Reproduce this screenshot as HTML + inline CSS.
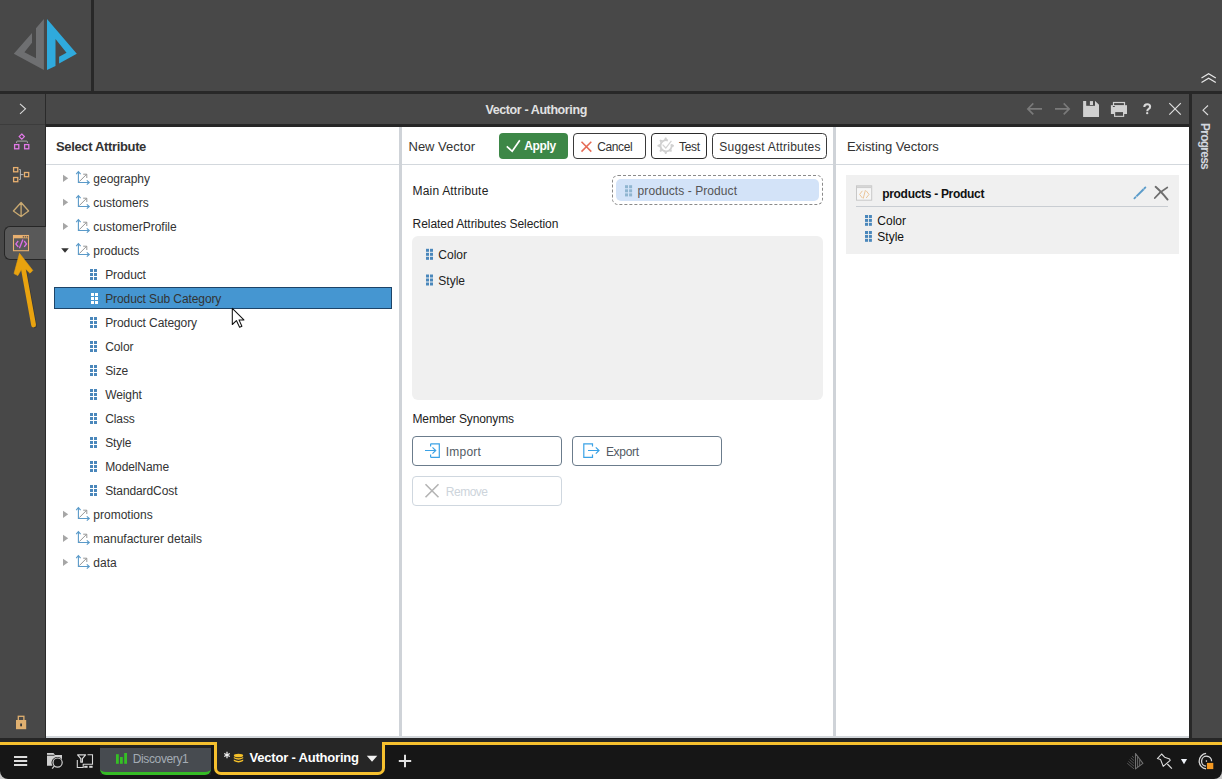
<!DOCTYPE html>
<html><head><meta charset="utf-8">
<style>
*{margin:0;padding:0;box-sizing:border-box}
html,body{width:1222px;height:779px;overflow:hidden;background:#484848;font-family:"Liberation Sans",sans-serif}
.a{position:absolute}
.t{position:absolute;white-space:nowrap;line-height:1;font-size:12px;color:#262626}
svg{position:absolute;overflow:visible}
</style></head><body>
<!-- top bar -->
<div class="a" style="left:91px;top:0;width:3px;height:91px;background:#282828"></div>
<div class="a" style="left:0;top:91px;width:1222px;height:3px;background:#282828"></div>
<svg style="left:0;top:0" width="92" height="91">
  <polygon fill="#6e6f71" points="43.9,18.9 43.9,70.1 13.8,53.7 32,32.9 32,42.7 24.4,52.2 36,58.3 36,28.3"/>
  <polygon fill="#2faadd" points="47,18.9 76.8,53.7 59.1,63.4 59.1,56.7 66.5,52.7 55.5,39 55.5,65.9 47,70.1"/>
</svg>
<svg style="left:1201px;top:73px" width="16" height="10">
  <polyline points="0.5,5 7.6,0.8 14.8,5" fill="none" stroke="#e6e6e6" stroke-width="1.3"/>
  <polyline points="0.5,9.5 7.6,5.2 14.8,9.5" fill="none" stroke="#e6e6e6" stroke-width="1.3"/>
</svg>

<!-- row 2 left cell -->
<div class="a" style="left:45px;top:94px;width:1px;height:644px;background:#2a2a2a"></div>
<div class="a" style="left:0;top:124px;width:45px;height:1px;background:#3c3c3c"></div>
<svg style="left:19px;top:103px" width="8" height="12">
  <polyline points="1,0.8 6.5,5.8 1,10.8" fill="none" stroke="#dcdcdc" stroke-width="1.1"/>
</svg>

<!-- title bar -->
<div class="a" style="left:46px;top:124px;width:1143px;height:3px;background:#262626"></div>
<div class="a" style="left:1189px;top:94px;width:3px;height:651px;background:#282828"></div>
<div class="t" style="left:485.5px;top:103.6px;font-size:12.5px;font-weight:bold;color:#e2e2e2;letter-spacing:-0.4px">Vector - Authoring</div>

<!-- content white -->
<div class="a" style="left:46px;top:127px;width:1143px;height:609px;background:#fff"></div>
<div class="a" style="left:46px;top:736px;width:1143px;height:3px;background:#d2d6da"></div>
<div class="a" style="left:0;top:738px;width:1222px;height:4px;background:#262626"></div>

<!-- progress panel -->
<svg style="left:1202px;top:105px" width="8" height="11">
  <polyline points="6,0.5 1,5.2 6,10" fill="none" stroke="#dcdcdc" stroke-width="1.1"/>
</svg>
<div class="t" style="left:1211px;top:123px;font-size:12px;font-weight:bold;color:#d2d6de;transform-origin:0 0;transform:rotate(90deg);letter-spacing:-0.75px">Progress</div>

<!-- panel dividers -->
<div class="a" style="left:399px;top:127px;width:3px;height:609px;background:#cfd3d8"></div>
<div class="a" style="left:833px;top:127px;width:3px;height:609px;background:#cfd3d8"></div>
<div class="a" style="left:46px;top:164px;width:353px;height:1px;background:#d3d8dd"></div>
<div class="a" style="left:402px;top:164px;width:431px;height:1px;background:#d3d8dd"></div>
<div class="a" style="left:836px;top:164px;width:353px;height:1px;background:#d3d8dd"></div>


<!-- left sidebar icons -->
<svg style="left:0;top:125px" width="45" height="140">
  <!-- icon1 hierarchy -->
  <g transform="translate(0,-125)">
  <polygon points="21.8,134 24.4,136.6 21.8,139.2 19.2,136.6" fill="none" stroke="#e27ae8" stroke-width="1.2"/>
  <path d="M16.6,143 v-1 q0,-0.9 0.9,-0.9 h9 q0.9,0 0.9,0.9 v1" fill="none" stroke="#a8a8a8" stroke-width="1"/>
  <rect x="14.6" y="144.6" width="4.2" height="4.2" fill="none" stroke="#e27ae8" stroke-width="1.3"/>
  <rect x="24.6" y="144.6" width="4.2" height="4.2" fill="none" stroke="#e27ae8" stroke-width="1.3"/>
  <!-- icon2 -->
  <rect x="13.6" y="167.6" width="4.2" height="4.2" fill="none" stroke="#e8b070" stroke-width="1.3"/>
  <rect x="13.6" y="177.5" width="4.2" height="4.2" fill="none" stroke="#e8b070" stroke-width="1.3"/>
  <rect x="24.5" y="172.5" width="4.2" height="4.2" fill="none" stroke="#e8b070" stroke-width="1.3"/>
  <path d="M19.2,169.5 h1.2 v10 h-1.2 M20.4,174.6 h3" fill="none" stroke="#b8b8b8" stroke-width="1"/>
  <!-- icon3 pyramid -->
  <path d="M21.1,202.5 L28.6,211 L21.1,216.5 L13.4,211 Z M21.1,202.5 V216.5" fill="none" stroke="#c9a971" stroke-width="1.3" stroke-linejoin="round"/>
  </g>
</svg>
<!-- selected sidebar tab -->
<div class="a" style="left:4px;top:226px;width:42px;height:34px;background:#595959;border:1.7px solid #262626;border-right:none;border-radius:6px 0 0 6px"></div>
<svg style="left:0;top:225px" width="45" height="40">
  <g transform="translate(0,-225)">
  <rect x="13.5" y="235.5" width="15" height="15.2" fill="none" stroke="#e8b070" stroke-width="1.1"/>
  <rect x="13.5" y="235.5" width="15" height="2.8" fill="#e8b070"/>
  <rect x="22.8" y="236.2" width="1.3" height="1.3" fill="#5a5048"/><rect x="24.8" y="236.2" width="1.3" height="1.3" fill="#5a5048"/><rect x="26.8" y="236.2" width="1.3" height="1.3" fill="#5a5048"/>
  <path d="M18.2,241 L15.9,243.9 L18.2,246.9 M24.2,241 L26.5,243.9 L24.2,246.9 M22.9,239.4 L19.4,248.2" fill="none" stroke="#dd6fe6" stroke-width="1.35"/>
  </g>
</svg>
<!-- yellow arrow -->
<svg style="left:0;top:245px" width="45" height="90">
  <g transform="translate(0,-245)">
  <path d="M33.6,325 L23.6,270" stroke="#000" stroke-opacity="0.22" stroke-width="5" stroke-linecap="round" transform="translate(0.8,0.8)"/>
  <path d="M33.6,325 L23.6,270" stroke="#e9a30f" stroke-width="4.8" stroke-linecap="round"/>
  <polygon points="19.5,253.3 32.8,270.4 30,273.2 25.6,269 21.2,269.8 17.8,275.6 14,273.6" fill="#e9a30f" stroke="#e9a30f" stroke-width="0.6" stroke-linejoin="round"/>
  </g>
</svg>
<!-- lock -->
<svg style="left:0;top:712px" width="45" height="22">
  <g transform="translate(0,-712)">
  <rect x="18.3" y="716.3" width="5.6" height="5" fill="none" stroke="#e0b070" stroke-width="1.3"/>
  <rect x="16" y="720" width="10.2" height="9.2" fill="#e0b070"/>
  <rect x="20.2" y="723.5" width="1.8" height="2.8" fill="#3a3a3a"/>
  </g>
</svg>

<!-- title bar icons -->
<svg style="left:1020px;top:95px" width="165" height="28">
  <g transform="translate(-1020,-95)">
  <path d="M1042,108.9 H1028 M1033.3,103.4 L1027.8,108.9 L1033.3,114.4" fill="none" stroke="#7a7a7a" stroke-width="1.6"/>
  <path d="M1055,108.9 H1069 M1063.7,103.4 L1069.2,108.9 L1063.7,114.4" fill="none" stroke="#7a7a7a" stroke-width="1.6"/>
  <path d="M1083.1,101 H1095.2 L1099,104.7 V116.9 H1083.1 Z" fill="#d0d0d0"/>
  <rect x="1086.2" y="100.5" width="8.8" height="5.3" fill="#484848"/>
  <rect x="1089.9" y="101.1" width="3.1" height="3.9" fill="#d0d0d0"/>
  <rect x="1113.5" y="102.5" width="11" height="3.5" fill="none" stroke="#d0d0d0" stroke-width="1.2"/>
  <rect x="1110.9" y="105.2" width="16.1" height="8.8" fill="#d0d0d0"/>
  <rect x="1112.9" y="106" width="1.9" height="1" fill="#484848"/>
  <rect x="1114" y="111" width="10.2" height="5.9" fill="#d0d0d0"/>
  <rect x="1115.2" y="112.1" width="7.8" height="3.7" fill="#484848"/>
  <path d="M1169.3,103.2 L1180.8,114.7 M1180.8,103.2 L1169.3,114.7" stroke="#dedede" stroke-width="1.2"/>
  </g>
</svg>
<svg style="left:1140px;top:100px" width="14" height="18"><g transform="translate(-1140,-100)">
  <path d="M1144.3,107 Q1144.3,104.2 1147.3,104.2 Q1150.1,104.2 1150.1,106.7 Q1150.1,108.2 1148.4,109.1 Q1147.3,109.7 1147.3,111.2" fill="none" stroke="#d8d8d8" stroke-width="2.1"/>
  <circle cx="1147.2" cy="113.2" r="1.15" fill="#d8d8d8"/></g></svg>


<!-- select attribute panel -->
<div class="t" style="left:56px;top:139.5px;font-size:13px;font-weight:bold;color:#333;letter-spacing:-0.35px">Select Attribute</div>
<div class="a" style="left:54px;top:287px;width:338px;height:22px;background:#4596d1;border:1px solid #1d4468"></div>
<div class="t" style="left:93.3px;top:172.84px;color:#333">geography</div>
<div class="t" style="left:93.3px;top:196.84px;color:#333">customers</div>
<div class="t" style="left:93.3px;top:220.84px;color:#333">customerProfile</div>
<div class="t" style="left:93.3px;top:244.84px;color:#333">products</div>
<div class="t" style="left:105.2px;top:268.84px;color:#333;letter-spacing:-0.1px">Product</div>
<div class="t" style="left:105.2px;top:292.84px;color:#333;letter-spacing:-0.1px">Product Sub Category</div>
<div class="t" style="left:105.2px;top:316.84px;color:#333;letter-spacing:-0.1px">Product Category</div>
<div class="t" style="left:105.2px;top:340.84px;color:#333;letter-spacing:-0.1px">Color</div>
<div class="t" style="left:105.2px;top:364.84px;color:#333;letter-spacing:-0.1px">Size</div>
<div class="t" style="left:105.2px;top:388.84px;color:#333;letter-spacing:-0.1px">Weight</div>
<div class="t" style="left:105.2px;top:412.84px;color:#333;letter-spacing:-0.1px">Class</div>
<div class="t" style="left:105.2px;top:436.84px;color:#333;letter-spacing:-0.1px">Style</div>
<div class="t" style="left:105.2px;top:460.84px;color:#333;letter-spacing:-0.1px">ModelName</div>
<div class="t" style="left:105.2px;top:484.84px;color:#333;letter-spacing:-0.1px">StandardCost</div>
<div class="t" style="left:93.3px;top:508.84px;color:#333">promotions</div>
<div class="t" style="left:93.3px;top:532.84px;color:#333">manufacturer details</div>
<div class="t" style="left:93.3px;top:556.84px;color:#333">data</div>
<svg style="left:0;top:0" width="400" height="600">
<polygon points="63,174.7 68.2,178.3 63,181.9" fill="#a6a6a6"/>
<path d="M78.4,172.0 V182.5 H89" fill="none" stroke="#5a9ac9" stroke-width="1.1"/>
<path d="M76.2,174.2 L78.4,171.7 L80.6,174.2 M86.8,180.3 L89.3,182.5 L86.8,184.7" fill="none" stroke="#5a9ac9" stroke-width="1.1"/>
<path d="M79.3,181.6 L86.4,174.5 M83.2,174.2 H86.8 V178.0" fill="none" stroke="#8c8c8c" stroke-width="0.9"/>
<polygon points="63,198.7 68.2,202.3 63,205.9" fill="#a6a6a6"/>
<path d="M78.4,196.0 V206.5 H89" fill="none" stroke="#5a9ac9" stroke-width="1.1"/>
<path d="M76.2,198.2 L78.4,195.7 L80.6,198.2 M86.8,204.3 L89.3,206.5 L86.8,208.7" fill="none" stroke="#5a9ac9" stroke-width="1.1"/>
<path d="M79.3,205.6 L86.4,198.5 M83.2,198.2 H86.8 V202.0" fill="none" stroke="#8c8c8c" stroke-width="0.9"/>
<polygon points="63,222.7 68.2,226.3 63,229.9" fill="#a6a6a6"/>
<path d="M78.4,220.0 V230.5 H89" fill="none" stroke="#5a9ac9" stroke-width="1.1"/>
<path d="M76.2,222.2 L78.4,219.7 L80.6,222.2 M86.8,228.3 L89.3,230.5 L86.8,232.7" fill="none" stroke="#5a9ac9" stroke-width="1.1"/>
<path d="M79.3,229.6 L86.4,222.5 M83.2,222.2 H86.8 V226.0" fill="none" stroke="#8c8c8c" stroke-width="0.9"/>
<polygon points="61.2,248.3 68.8,248.3 65,252.8" fill="#333"/>
<path d="M78.4,244.0 V254.5 H89" fill="none" stroke="#5a9ac9" stroke-width="1.1"/>
<path d="M76.2,246.2 L78.4,243.7 L80.6,246.2 M86.8,252.3 L89.3,254.5 L86.8,256.7" fill="none" stroke="#5a9ac9" stroke-width="1.1"/>
<path d="M79.3,253.6 L86.4,246.5 M83.2,246.2 H86.8 V250.0" fill="none" stroke="#8c8c8c" stroke-width="0.9"/>
<rect x="90" y="269" width="3" height="3" fill="#4a87bb"/>
<rect x="90" y="273" width="3" height="3" fill="#4a87bb"/>
<rect x="90" y="277" width="3" height="3" fill="#4a87bb"/>
<rect x="94" y="269" width="3" height="3" fill="#4a87bb"/>
<rect x="94" y="273" width="3" height="3" fill="#4a87bb"/>
<rect x="94" y="277" width="3" height="3" fill="#4a87bb"/>
<rect x="91" y="293" width="3" height="3" fill="#ffffff"/>
<rect x="91" y="297" width="3" height="3" fill="#ffffff"/>
<rect x="91" y="301" width="3" height="3" fill="#ffffff"/>
<rect x="95" y="293" width="3" height="3" fill="#ffffff"/>
<rect x="95" y="297" width="3" height="3" fill="#ffffff"/>
<rect x="95" y="301" width="3" height="3" fill="#ffffff"/>
<rect x="90" y="317" width="3" height="3" fill="#4a87bb"/>
<rect x="90" y="321" width="3" height="3" fill="#4a87bb"/>
<rect x="90" y="325" width="3" height="3" fill="#4a87bb"/>
<rect x="94" y="317" width="3" height="3" fill="#4a87bb"/>
<rect x="94" y="321" width="3" height="3" fill="#4a87bb"/>
<rect x="94" y="325" width="3" height="3" fill="#4a87bb"/>
<rect x="90" y="341" width="3" height="3" fill="#4a87bb"/>
<rect x="90" y="345" width="3" height="3" fill="#4a87bb"/>
<rect x="90" y="349" width="3" height="3" fill="#4a87bb"/>
<rect x="94" y="341" width="3" height="3" fill="#4a87bb"/>
<rect x="94" y="345" width="3" height="3" fill="#4a87bb"/>
<rect x="94" y="349" width="3" height="3" fill="#4a87bb"/>
<rect x="90" y="365" width="3" height="3" fill="#4a87bb"/>
<rect x="90" y="369" width="3" height="3" fill="#4a87bb"/>
<rect x="90" y="373" width="3" height="3" fill="#4a87bb"/>
<rect x="94" y="365" width="3" height="3" fill="#4a87bb"/>
<rect x="94" y="369" width="3" height="3" fill="#4a87bb"/>
<rect x="94" y="373" width="3" height="3" fill="#4a87bb"/>
<rect x="90" y="389" width="3" height="3" fill="#4a87bb"/>
<rect x="90" y="393" width="3" height="3" fill="#4a87bb"/>
<rect x="90" y="397" width="3" height="3" fill="#4a87bb"/>
<rect x="94" y="389" width="3" height="3" fill="#4a87bb"/>
<rect x="94" y="393" width="3" height="3" fill="#4a87bb"/>
<rect x="94" y="397" width="3" height="3" fill="#4a87bb"/>
<rect x="90" y="413" width="3" height="3" fill="#4a87bb"/>
<rect x="90" y="417" width="3" height="3" fill="#4a87bb"/>
<rect x="90" y="421" width="3" height="3" fill="#4a87bb"/>
<rect x="94" y="413" width="3" height="3" fill="#4a87bb"/>
<rect x="94" y="417" width="3" height="3" fill="#4a87bb"/>
<rect x="94" y="421" width="3" height="3" fill="#4a87bb"/>
<rect x="90" y="437" width="3" height="3" fill="#4a87bb"/>
<rect x="90" y="441" width="3" height="3" fill="#4a87bb"/>
<rect x="90" y="445" width="3" height="3" fill="#4a87bb"/>
<rect x="94" y="437" width="3" height="3" fill="#4a87bb"/>
<rect x="94" y="441" width="3" height="3" fill="#4a87bb"/>
<rect x="94" y="445" width="3" height="3" fill="#4a87bb"/>
<rect x="90" y="461" width="3" height="3" fill="#4a87bb"/>
<rect x="90" y="465" width="3" height="3" fill="#4a87bb"/>
<rect x="90" y="469" width="3" height="3" fill="#4a87bb"/>
<rect x="94" y="461" width="3" height="3" fill="#4a87bb"/>
<rect x="94" y="465" width="3" height="3" fill="#4a87bb"/>
<rect x="94" y="469" width="3" height="3" fill="#4a87bb"/>
<rect x="90" y="485" width="3" height="3" fill="#4a87bb"/>
<rect x="90" y="489" width="3" height="3" fill="#4a87bb"/>
<rect x="90" y="493" width="3" height="3" fill="#4a87bb"/>
<rect x="94" y="485" width="3" height="3" fill="#4a87bb"/>
<rect x="94" y="489" width="3" height="3" fill="#4a87bb"/>
<rect x="94" y="493" width="3" height="3" fill="#4a87bb"/>
<polygon points="63,510.7 68.2,514.3 63,517.9" fill="#a6a6a6"/>
<path d="M78.4,508.0 V518.5 H89" fill="none" stroke="#5a9ac9" stroke-width="1.1"/>
<path d="M76.2,510.2 L78.4,507.7 L80.6,510.2 M86.8,516.3 L89.3,518.5 L86.8,520.7" fill="none" stroke="#5a9ac9" stroke-width="1.1"/>
<path d="M79.3,517.6 L86.4,510.5 M83.2,510.2 H86.8 V514.0" fill="none" stroke="#8c8c8c" stroke-width="0.9"/>
<polygon points="63,534.7 68.2,538.3 63,541.9" fill="#a6a6a6"/>
<path d="M78.4,532.0 V542.5 H89" fill="none" stroke="#5a9ac9" stroke-width="1.1"/>
<path d="M76.2,534.2 L78.4,531.7 L80.6,534.2 M86.8,540.3 L89.3,542.5 L86.8,544.7" fill="none" stroke="#5a9ac9" stroke-width="1.1"/>
<path d="M79.3,541.6 L86.4,534.5 M83.2,534.2 H86.8 V538.0" fill="none" stroke="#8c8c8c" stroke-width="0.9"/>
<polygon points="63,558.7 68.2,562.3 63,565.9" fill="#a6a6a6"/>
<path d="M78.4,556.0 V566.5 H89" fill="none" stroke="#5a9ac9" stroke-width="1.1"/>
<path d="M76.2,558.2 L78.4,555.7 L80.6,558.2 M86.8,564.3 L89.3,566.5 L86.8,568.7" fill="none" stroke="#5a9ac9" stroke-width="1.1"/>
<path d="M79.3,565.6 L86.4,558.5 M83.2,558.2 H86.8 V562.0" fill="none" stroke="#8c8c8c" stroke-width="0.9"/>
</svg>
<svg style="left:231px;top:307px" width="16" height="22">
  <path d="M1.3,1.3 L1.3,17.5 L5.4,13.6 L8.6,20.2 L10.9,19.2 L8,12.9 L12.9,12.9 Z" fill="#fff" stroke="#111" stroke-width="1.05" stroke-linejoin="round"/>
</svg>


<!-- new vector panel -->
<div class="t" style="left:408.5px;top:139.8px;font-size:13px;color:#333">New Vector</div>
<div class="a" style="left:499px;top:133px;width:69px;height:26px;background:#3d8747;border-radius:4px"></div>
<div class="t" style="left:524.3px;top:139.7px;font-weight:bold;color:#fff;letter-spacing:-0.35px">Apply</div>
<div class="a" style="left:573px;top:133px;width:73px;height:26px;border:1.3px solid #3a3a3a;border-radius:4px"></div>
<div class="t" style="left:597.3px;top:140.5px;color:#333;letter-spacing:-0.4px">Cancel</div>
<div class="a" style="left:651px;top:133px;width:56px;height:26px;border:1.3px solid #2a2a2a;border-radius:4px"></div>
<div class="t" style="left:679px;top:140.7px;color:#333;letter-spacing:-0.3px">Test</div>
<div class="a" style="left:712px;top:133px;width:115px;height:26px;border:1.3px solid #3a3a3a;border-radius:4.5px"></div>
<div class="t" style="left:719.3px;top:141px;color:#333;letter-spacing:0.22px">Suggest Attributes</div>
<svg style="left:495px;top:130px" width="240" height="35">
 <g transform="translate(-495,-130)">
  <path d="M506.8,146.4 L512.2,151.3 L519.8,140.3" fill="none" stroke="#fff" stroke-width="1.7"/>
  <path d="M581.5,141.7 L591.3,151.6 M591.3,141.7 L581.5,151.6" stroke="#e56b56" stroke-width="1.5"/>
  <path d="M671.4,144.2 A5.6,5.6 0 1 1 667.9,140.5" fill="none" stroke="#d0d0d0" stroke-width="1.9"/>
  <g fill="#d0d0d0"><polygon points="664.1,140.1 665.0,137.5 666.4000000000001,137.5 667.3000000000001,140.1" transform="rotate(0 665.7 145.7)"/><polygon points="664.1,140.1 665.0,137.5 666.4000000000001,137.5 667.3000000000001,140.1" transform="rotate(-45 665.7 145.7)"/><polygon points="664.1,140.1 665.0,137.5 666.4000000000001,137.5 667.3000000000001,140.1" transform="rotate(-90 665.7 145.7)"/><polygon points="664.1,140.1 665.0,137.5 666.4000000000001,137.5 667.3000000000001,140.1" transform="rotate(-135 665.7 145.7)"/><polygon points="664.1,140.1 665.0,137.5 666.4000000000001,137.5 667.3000000000001,140.1" transform="rotate(180 665.7 145.7)"/><polygon points="664.1,140.1 665.0,137.5 666.4000000000001,137.5 667.3000000000001,140.1" transform="rotate(135 665.7 145.7)"/><polygon points="664.1,140.1 665.0,137.5 666.4000000000001,137.5 667.3000000000001,140.1" transform="rotate(90 665.7 145.7)"/></g>
  <path d="M662.6,144.6 L665.8,148 L671.4,140.8" fill="none" stroke="#d2d2d2" stroke-width="1.2"/>
 </g>
</svg>

<div class="t" style="left:412.6px;top:184.6px;color:#222;letter-spacing:0.18px">Main Attribute</div>
<div class="a" style="left:612px;top:175.3px;width:211px;height:29.5px;border:1px dashed #8a8a8a;border-radius:6px"></div>
<div class="a" style="left:616px;top:179px;width:203.3px;height:22px;background:#d3e3f8;border-radius:5px"></div>
<div class="t" style="left:637.6px;top:185.2px;color:#555;letter-spacing:0.08px">products - Product</div>
<div class="t" style="left:412.6px;top:217.9px;color:#222;letter-spacing:-0.06px">Related Attributes Selection</div>
<div class="a" style="left:412px;top:236px;width:411px;height:163.5px;background:#f0f0f0;border-radius:6px"></div>
<div class="t" style="left:438.3px;top:248.9px;color:#222">Color</div>
<div class="t" style="left:438.3px;top:274.6px;color:#222">Style</div>
<div class="t" style="left:412.5px;top:413.2px;color:#222;letter-spacing:-0.13px">Member Synonyms</div>
<div class="a" style="left:412px;top:436px;width:150px;height:29.5px;border:1.2px solid #6b7c8c;border-radius:4px"></div>
<div class="a" style="left:572px;top:436px;width:150px;height:29.5px;border:1.2px solid #6b7c8c;border-radius:4px"></div>
<div class="a" style="left:412px;top:476px;width:150px;height:29.5px;border:1.2px solid #cfd7df;border-radius:4px"></div>
<div class="t" style="left:445.8px;top:445.8px;color:#525a63;letter-spacing:0.2px">Import</div>
<div class="t" style="left:605.9px;top:445.8px;color:#525a63;letter-spacing:-0.3px">Export</div>
<div class="t" style="left:445.8px;top:486px;color:#cdd4db;letter-spacing:-0.5px">Remove</div>
<svg style="left:400px;top:180px" width="440" height="330">
 <g transform="translate(-400,-180)">
  <rect x="625" y="185.2" width="3" height="3" fill="#8fb5d0"/><rect x="625" y="189.29999999999998" width="3" height="3" fill="#8fb5d0"/><rect x="625" y="193.39999999999998" width="3" height="3" fill="#8fb5d0"/><rect x="629.1" y="185.2" width="3" height="3" fill="#8fb5d0"/><rect x="629.1" y="189.29999999999998" width="3" height="3" fill="#8fb5d0"/><rect x="629.1" y="193.39999999999998" width="3" height="3" fill="#8fb5d0"/>
  <rect x="426" y="248.8" width="3" height="3" fill="#4a87bb"/><rect x="426" y="252.8" width="3" height="3" fill="#4a87bb"/><rect x="426" y="256.8" width="3" height="3" fill="#4a87bb"/><rect x="430" y="248.8" width="3" height="3" fill="#4a87bb"/><rect x="430" y="252.8" width="3" height="3" fill="#4a87bb"/><rect x="430" y="256.8" width="3" height="3" fill="#4a87bb"/>
  <rect x="426" y="274.5" width="3" height="3" fill="#4a87bb"/><rect x="426" y="278.5" width="3" height="3" fill="#4a87bb"/><rect x="426" y="282.5" width="3" height="3" fill="#4a87bb"/><rect x="430" y="274.5" width="3" height="3" fill="#4a87bb"/><rect x="430" y="278.5" width="3" height="3" fill="#4a87bb"/><rect x="430" y="282.5" width="3" height="3" fill="#4a87bb"/>
  <path d="M430.6,443.8 H439.3 V457.3 H430.6 M430.6,443.8 V446.6 M430.6,457.3 V454.5" fill="none" stroke="#3aa2e6" stroke-width="1.2"/>
  <path d="M425,450.5 H435.5 M432.5,447.3 L435.7,450.5 L432.5,453.7" fill="none" stroke="#3aa2e6" stroke-width="1.2"/>
  <path d="M592.5,446.6 V443.8 H583.8 V457.3 H592.5 V454.5" fill="none" stroke="#3aa2e6" stroke-width="1.2"/>
  <path d="M588,450.5 H598.8 M595.8,447.3 L599,450.5 L595.8,453.7" fill="none" stroke="#3aa2e6" stroke-width="1.2"/>
  <path d="M425.5,484.3 L438.5,497.3 M438.5,484.3 L425.5,497.3" stroke="#b4b4b4" stroke-width="1.6"/>
 </g>
</svg>

<!-- existing vectors panel -->
<div class="t" style="left:847px;top:139.8px;font-size:13px;color:#333;letter-spacing:-0.05px">Existing Vectors</div>
<div class="a" style="left:846px;top:175px;width:333px;height:78.5px;background:#f0f0f0"></div>
<div class="a" style="left:856px;top:206px;width:312px;height:1px;background:#c9cdd2"></div>
<div class="t" style="left:882.2px;top:187.8px;font-size:12px;font-weight:bold;color:#111;letter-spacing:-0.3px">products - Product</div>
<div class="t" style="left:877.3px;top:214.5px;color:#111">Color</div>
<div class="t" style="left:877.3px;top:230.5px;color:#111">Style</div>
<svg style="left:840px;top:175px" width="340" height="80">
 <g transform="translate(-840,-175)">
  <rect x="856.5" y="185.8" width="15.2" height="14.4" fill="#f6f6f6" stroke="#c8c8c8" stroke-width="1"/>
  <rect x="857" y="186.3" width="14.2" height="1.8" fill="#cfcfcf"/>
  <path d="M862.4,190.8 L859.6,194.4 L862.4,198 M866.2,190.8 L869,194.4 L866.2,198 M865.4,190.2 L863.2,198.6" fill="none" stroke="#ebc59a" stroke-width="1"/>
  <rect x="865" y="215" width="3" height="3" fill="#4a87bb"/><rect x="865" y="218.9" width="3" height="3" fill="#4a87bb"/><rect x="865" y="222.8" width="3" height="3" fill="#4a87bb"/><rect x="868.9" y="215" width="3" height="3" fill="#4a87bb"/><rect x="868.9" y="218.9" width="3" height="3" fill="#4a87bb"/><rect x="868.9" y="222.8" width="3" height="3" fill="#4a87bb"/>
  <rect x="865" y="231" width="3" height="3" fill="#4a87bb"/><rect x="865" y="234.9" width="3" height="3" fill="#4a87bb"/><rect x="865" y="238.8" width="3" height="3" fill="#4a87bb"/><rect x="868.9" y="231" width="3" height="3" fill="#4a87bb"/><rect x="868.9" y="234.9" width="3" height="3" fill="#4a87bb"/><rect x="868.9" y="238.8" width="3" height="3" fill="#4a87bb"/>
  <path d="M1136.4,196.4 L1143.6,189.2" stroke="#5b9cca" stroke-width="2"/>
  <path d="M1134.4,198.3 L1135.6,197.1 M1144.3,188.5 L1145.4,187.4" stroke="#5b9cca" stroke-width="1.8" stroke-linecap="round"/>
  <path d="M1155.6,186.8 Q1161,191.5 1167.6,199.6" fill="none" stroke="#6e6e6e" stroke-width="1.9" stroke-linecap="round"/>
  <path d="M1154.8,198 Q1160,191.5 1167.3,187.4" fill="none" stroke="#6e6e6e" stroke-width="1.7" stroke-linecap="round"/>
 </g>
</svg>

<!-- taskbar -->
<div class="a" style="left:0;top:742px;width:1222px;height:37px;background:#c8c8c8"></div>
<div class="a" style="left:0;top:742px;width:1222px;height:37px;background:#161616;border-radius:0 0 8px 8px"></div>
<div class="a" style="left:0;top:742px;width:217px;height:3px;background:#f6c02e"></div>
<div class="a" style="left:382px;top:742px;width:840px;height:3px;background:#f6c02e"></div>
<div class="a" style="left:214px;top:742px;width:171px;height:33px;background:#262626;border:3px solid #f6c02e;border-top:none;border-radius:0 0 7px 7px"></div>
<!-- discovery tab -->
<div class="a" style="left:100px;top:745px;width:111px;height:30px;background:#222"></div>
<div class="a" style="left:100px;top:748px;width:111px;height:27px;background:#474b50;border-bottom:3.5px solid #35bb25;border-radius:0 0 6px 6px"></div>
<svg style="left:0;top:745px" width="440" height="34">
 <g transform="translate(0,-745)">
  <rect x="14" y="756" width="13.2" height="2" fill="#dcdcdc"/>
  <rect x="14" y="760" width="13.2" height="2" fill="#dcdcdc"/>
  <rect x="14" y="764" width="13.2" height="2" fill="#dcdcdc"/>
  <path d="M47,753 H53.5 L55,755 H62 V759.5 A5.6,5.6 0 0 0 52.5,765.8 H47 Z" fill="#d0d0d0"/>
  <path d="M47,755.3 H54.5" stroke="#161616" stroke-width="0.8"/>
  <circle cx="57.6" cy="762.6" r="4.6" fill="none" stroke="#d0d0d0" stroke-width="1.2"/>
  <path d="M54.5,765.8 L52.2,768.6" stroke="#d0d0d0" stroke-width="1.3"/>
  <path d="M77.6,754.9 H85.6 L82.4,758.6 V762.2 H80.8 V758.6 Z" fill="none" stroke="#d8d8d8" stroke-width="1.2" stroke-linejoin="round"/>
  <path d="M87.5,754.8 H92.5 V764.2 H83.2 V767.5 H77.3 V760" fill="none" stroke="#d8d8d8" stroke-width="1.1"/>
  <rect x="84.2" y="765.8" width="3.4" height="2" fill="#d8d8d8"/>
  <rect x="89.2" y="765.8" width="3.4" height="2" fill="#d8d8d8"/>
  <rect x="116" y="754.2" width="2.8" height="9.6" fill="#35c025"/>
  <rect x="120" y="757" width="2.8" height="6.8" fill="#35c025"/>
  <rect x="124.2" y="753" width="2.8" height="10.8" fill="#35c025"/>
  <path d="M227,751.8 V758.2 M224.2,753.4 L229.8,756.6 M229.8,753.4 L224.2,756.6" stroke="#f4f4f4" stroke-width="1.2"/>
  <ellipse cx="238.5" cy="755.5" rx="4.7" ry="1.8" fill="#f5c02a"/>
  <path d="M233.8,756.9 Q238.5,759.8 243.2,756.9 V758.3 Q238.5,761.2 233.8,758.3 Z" fill="#f5c02a"/>
  <path d="M233.8,759.6 Q238.5,762.5 243.2,759.6 V761.1 Q238.5,764 233.8,761.1 Z" fill="#f5c02a"/>
  <polygon points="366.8,755.8 377.3,755.8 372,761.7" fill="#f2f2f2"/>
  <path d="M405,754.8 V767.2 M398.8,761 H411.2" stroke="#e0e0e0" stroke-width="2"/>
 </g>
</svg>
<div class="t" style="left:132.8px;top:752.9px;color:#a4acb4;letter-spacing:-0.38px">Discovery1</div>
<div class="t" style="left:249.5px;top:751.1px;font-size:13px;font-weight:bold;color:#fff;letter-spacing:-0.2px">Vector - Authoring</div>
<svg style="left:1120px;top:745px" width="102" height="34">
 <g transform="translate(-1120,-745)">
  <path d="M1135.5,753.5 V768.9 L1142.9,763.4 Z" fill="none" stroke="#707070" stroke-width="1.1" stroke-linejoin="round"/>
  <path d="M1137.6,756.2 V767.4 M1139.7,759.6 V765.9" stroke="#707070" stroke-width="0.9"/>
  <path d="M1127.2,763.2 L1134,768.9 M1128.4,761.4 L1134,766.2 M1129.6,759.6 L1134,763.4 M1130.8,757.8 L1134,760.6 M1132,756 L1134,757.8" stroke="#5a5a5a" stroke-width="0.9"/>
  <path d="M1161.6,754 L1157.4,758.6 L1160.6,759.6 L1163.2,766.4 L1170.2,760.4 L1169.6,759 L1164.6,757.2 Z" fill="none" stroke="#dcdcdc" stroke-width="1.1" stroke-linejoin="round"/>
  <path d="M1167.4,764 L1171.9,768.7" stroke="#dcdcdc" stroke-width="1.2"/>
  <polygon points="1180.9,759 1187.1,759 1184,764.2" fill="#eef2f8"/>
  <path d="M1206.1,753.4 A7.8,7.8 0 0 0 1206.1,768.9" fill="none" stroke="#d8d8d8" stroke-width="1.3"/>
  <path d="M1211.6,761.2 A5,5 0 1 0 1206.1,766.2" fill="none" stroke="#d8d8d8" stroke-width="1.3"/>
  <circle cx="1206.4" cy="761.1" r="0.8" fill="#d8d8d8"/>
  <rect x="1206.3" y="762.3" width="7.6" height="7.4" fill="#161616"/>
  <rect x="1206.9" y="762.9" width="6.4" height="6.2" fill="#f59a23"/>
 </g>
</svg>

</body></html>
